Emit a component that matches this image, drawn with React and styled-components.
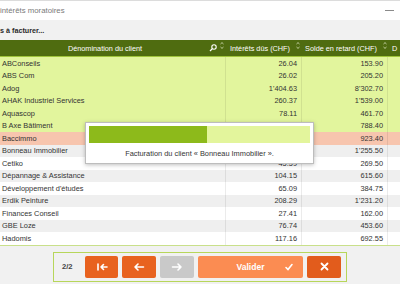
import React from "react";
import styled, { createGlobalStyle } from "styled-components";

const Global = createGlobalStyle`
  html, body { margin: 0; padding: 0; background: #ffffff; }
  body { font-family: "Liberation Sans", Arial, sans-serif; overflow: hidden; }
`;

const Window = styled.div`
  width: 400px;
  height: 284px;
  display: flex;
  flex-direction: column;
  overflow: hidden;
  position: relative;
`;

const TitleBar = styled.div`
  height: 19px;
  border-top: 1px solid #dcdcdc;
  display: flex;
  align-items: center;
  justify-content: space-between;
  padding-right: 6px;
  font-size: 7.8px;
  color: #7a7a7a;
`;

const Minimize = styled.span`
  width: 9px;
  height: 1px;
  background: #8a8a8a;
`;

const SubBar = styled.div`
  height: 20px;
  background: #f1f1f1;
  display: flex;
  align-items: center;
  font-size: 7.2px;
  font-weight: 700;
  color: #2a2a2a;
`;

const Table = styled.div`
  display: flex;
  flex-direction: column;
  width: 420px;
`;

const Cols = `
  display: grid;
  grid-template-columns: 226px 76px 86px 32px;
`;

const HeadRow = styled.div`
  ${Cols}
  height: 16px;
  background: #4f6c10;
  border-bottom: 1px solid #9fc43a;
  color: #ffffff;
  font-size: 7.3px;
`;

const HeadCell = styled.div`
  display: flex;
  align-items: center;
  justify-content: ${(p) => (p.$left ? "flex-start" : "center")};
  gap: 3px;
  padding: 0 2px 0 4px;
  white-space: nowrap;
`;

const HeadLabel = styled.span`
  flex: ${(p) => (p.$grow ? 1 : "none")};
  text-align: center;
`;

const SortIcon = styled.svg`
  align-self: flex-start;
  margin-top: 2px;
  flex: none;
`;

const Row = styled.div`
  ${Cols}
  height: 12.5px;
  background: ${(p) => p.$bg};
  font-size: 7.4px;
  color: #333333;
`;

const Cell = styled.div`
  display: flex;
  align-items: center;
  justify-content: ${(p) => (p.$num ? "flex-end" : "flex-start")};
  padding: ${(p) => (p.$num ? "0 4px 0 0" : "0 0 0 2px")};
  border-right: 1px solid ${(p) => (p.$line ? "rgba(0,0,0,0.08)" : "transparent")};
  white-space: nowrap;
  overflow: hidden;
`;

const Footer = styled.div`
  flex: 1;
  background: #f1f1f1;
  border-top: 1px solid #c9e08a;
  display: flex;
  justify-content: center;
  padding-top: 6px;
`;

const Pager = styled.div`
  width: 294px;
  height: 30px;
  border: 1px solid #b7d65a;
  display: flex;
  align-items: center;
  padding: 0 5px 0 8px;
  gap: 4px;
  box-sizing: border-box;
`;

const Count = styled.span`
  font-size: 7.6px;
  font-weight: 700;
  color: #444444;
  width: 16px;
  margin-right: 3px;
`;

const Btn = styled.button`
  height: 22px;
  width: ${(p) => p.$w || 34}px;
  border: none;
  border-radius: 2px;
  background: ${(p) => p.$bg};
  color: #ffffff;
  display: flex;
  align-items: center;
  justify-content: center;
  padding: 0;
  font-family: inherit;
  font-size: 8.5px;
  font-weight: 700;
  position: relative;
`;

const Check = styled.span`
  position: absolute;
  right: 9px;
  top: 6px;
`;

const Dialog = styled.div`
  position: absolute;
  left: 85px;
  top: 122px;
  width: 229px;
  height: 42px;
  background: #ffffff;
  border: 1px solid #bdbdbd;
  box-shadow: 0 1px 4px rgba(0, 0, 0, 0.25);
  box-sizing: border-box;
  padding: 3px;
  display: flex;
  flex-direction: column;
  align-items: center;
`;

const Progress = styled.div`
  width: 100%;
  height: 17px;
  background: #e3f59c;
`;

const ProgressFill = styled.div`
  height: 100%;
  background: #8dba1b;
`;

const DialogText = styled.div`
  font-size: 7.4px;
  color: #333333;
  margin-top: 6px;
`;

const Search = () => (
  <svg width="8" height="8" viewBox="0 0 8 8">
    <circle cx="5" cy="3" r="2.2" fill="none" stroke="#fff" strokeWidth="1.1" />
    <line x1="3.4" y1="4.6" x2="1" y2="7" stroke="#fff" strokeWidth="1.3" />
  </svg>
);

const SortArrows = () => (
  <SortIcon width="4" height="7" viewBox="0 0 4 7" fill="none" stroke="#dfe8c4" strokeWidth="0.8">
    <path d="M0.5 2L2 0.6 3.5 2M0.5 5L2 6.4 3.5 5" />
  </SortIcon>
);

const rows = [
  ["ABConseils", "26.04", "153.90", "#e2f59d"],
  ["ABS Com", "26.02", "205.20", "#e2f59d"],
  ["Adog", "1'404.63", "8'302.70", "#e2f59d"],
  ["AHAK Industriel Services", "260.37", "1'539.00", "#e2f59d"],
  ["Aquascop", "78.11", "461.70", "#e2f59d"],
  ["B Axe Bâtiment", "", "788.40", "#e2f59d"],
  ["Baccimmo", "", "923.40", "#f7c5ae"],
  ["Bonneau Immobilier", "", "1'255.50", "#efefef"],
  ["Cetiko", "45.59", "269.50", "#ffffff"],
  ["Dépannage & Assistance", "104.15", "615.60", "#efefef"],
  ["Développement d'études", "65.09", "384.75", "#ffffff"],
  ["Erdik Peinture", "208.29", "1'231.20", "#efefef"],
  ["Finances Conseil", "27.41", "162.00", "#ffffff"],
  ["GBE Loze", "76.74", "453.60", "#efefef"],
  ["Hadomis", "117.16", "692.55", "#ffffff"],
];

const ArrowIcon = ({ d }) => (
  <svg width="12" height="10" viewBox="0 0 12 10" fill="none" stroke="#fff" strokeWidth="1.6" strokeLinecap="round" strokeLinejoin="round">
    <path d={d} />
  </svg>
);

export default function App() {
  const progress = 8 / 15;
  return (
    <>
      <Global />
      <Window>
        <TitleBar>
          <span>intérêts moratoires</span>
          <Minimize />
        </TitleBar>
        <SubBar>s à facturer...</SubBar>
        <Table>
          <HeadRow>
            <HeadCell>
              <HeadLabel $grow>Dénomination du client</HeadLabel>
              <Search />
              <SortArrows />
            </HeadCell>
            <HeadCell>
              <HeadLabel>Intérêts dûs (CHF)</HeadLabel>
              <Search />
              <SortArrows />
            </HeadCell>
            <HeadCell>
              <HeadLabel>Solde en retard (CHF)</HeadLabel>
              <Search />
              <SortArrows />
            </HeadCell>
            <HeadCell $left>D</HeadCell>
          </HeadRow>
          {rows.map(([name, due, late, bg]) => (
            <Row key={name} $bg={bg}>
              <Cell $line>{name}</Cell>
              <Cell $num $line>{due}</Cell>
              <Cell $num $line>{late}</Cell>
              <Cell />
            </Row>
          ))}
        </Table>
        <Footer>
          <Pager>
            <Count>2/2</Count>
            <Btn $bg="#e8621f">
              <ArrowIcon d="M2 2v6M11 5H5M7.5 2.5L5 5l2.5 2.5" />
            </Btn>
            <Btn $bg="#e8621f">
              <ArrowIcon d="M10.5 5H2M5 2L2 5l3 3" />
            </Btn>
            <Btn $bg="#c9c9c9">
              <ArrowIcon d="M1.5 5H10M7 2l3 3-3 3" />
            </Btn>
            <Btn $bg="#fb8c52" $w={107}>
              Valider
              <Check>
                <svg width="10" height="10" viewBox="0 0 10 10" fill="none" stroke="#fff" strokeWidth="1.6" strokeLinecap="round">
                  <path d="M2 5.5l2 2L8 2.5" />
                </svg>
              </Check>
            </Btn>
            <Btn $bg="#e25c1c">
              <svg width="9" height="9" viewBox="0 0 9 9" stroke="#fff" strokeWidth="1.8" strokeLinecap="round">
                <path d="M1.5 1.5l6 6M7.5 1.5l-6 6" />
              </svg>
            </Btn>
          </Pager>
        </Footer>
        <Dialog>
          <Progress>
            <ProgressFill style={{ width: `${progress * 100}%` }} />
          </Progress>
          <DialogText>Facturation du client « Bonneau Immobilier ».</DialogText>
        </Dialog>
      </Window>
    </>
  );
}
